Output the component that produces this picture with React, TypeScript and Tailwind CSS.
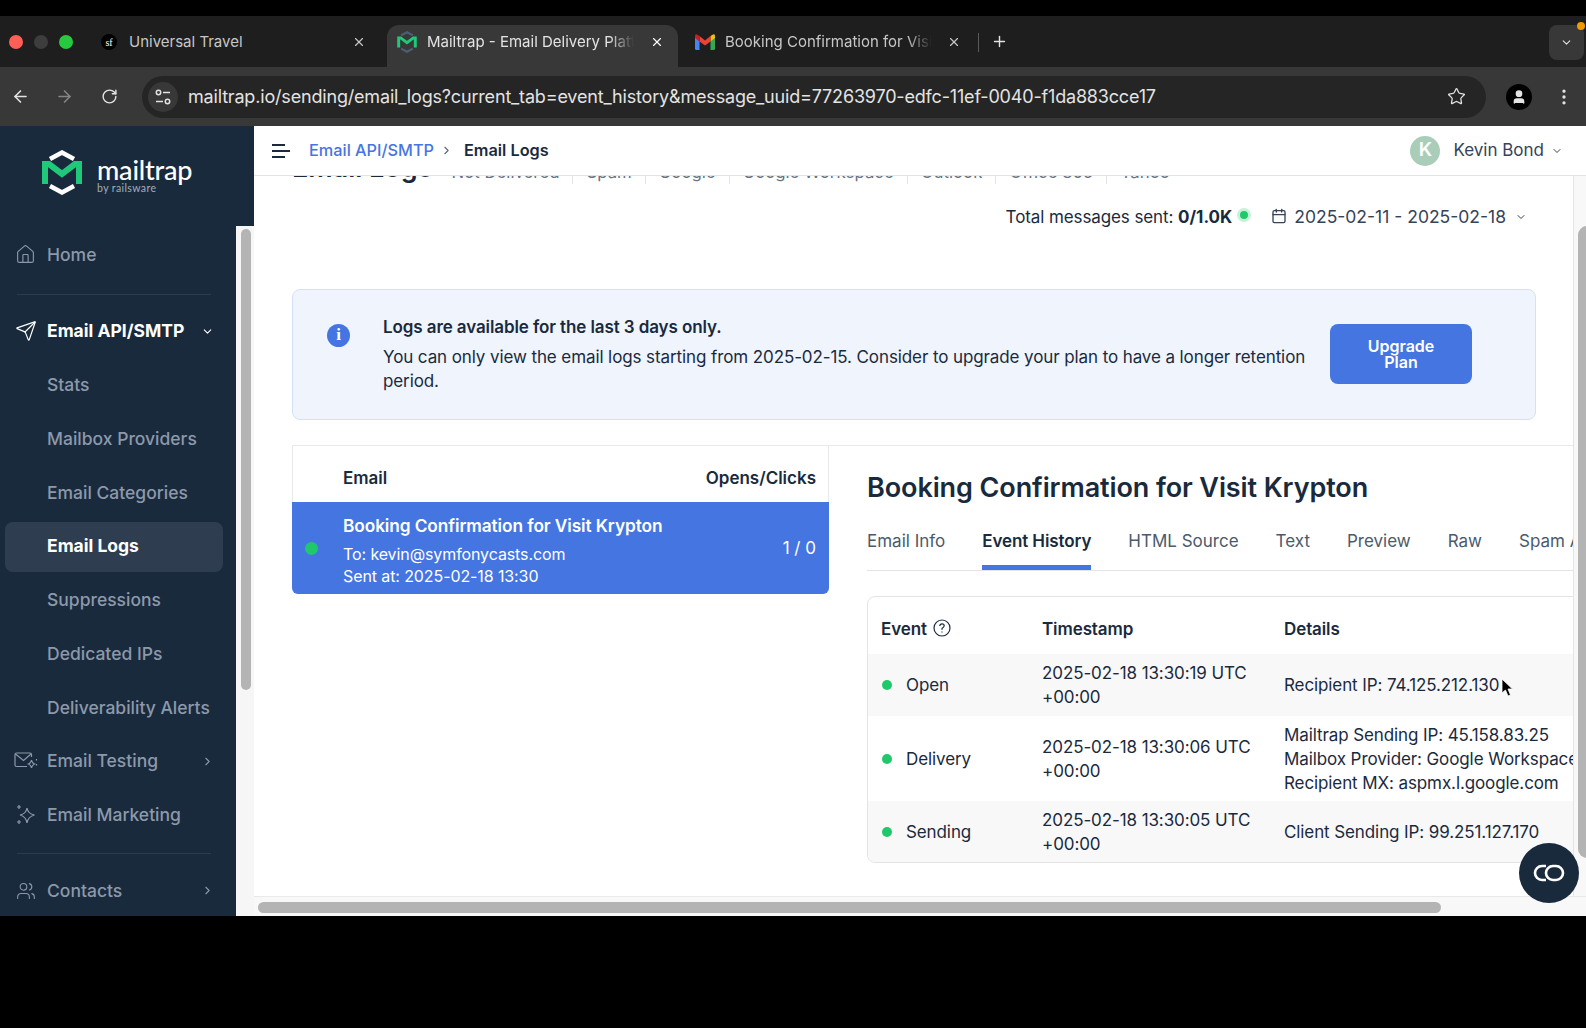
import React from "react";
import {
  ArrowLeft,
  ArrowRight,
  Calendar,
  ChevronDown,
  ChevronRight,
  EllipsisVertical,
  House,
  Plus,
  RotateCw,
  Send,
  Star,
  User,
  Users,
  X,
} from "lucide-react";

const subItems = ["Stats", "Mailbox Providers", "Email Categories", "Email Logs", "Suppressions", "Dedicated IPs", "Deliverability Alerts"];
const tabs = ["Email Info", "Event History", "HTML Source", "Text", "Preview", "Raw", "Spam Analysis"];
const filters = ["Not Delivered", "Spam", "Google", "Google Workspace", "Outlook", "Office 365", "Yahoo"];

const events = [
  { name: "Open", time: "2025-02-18 13:30:19 UTC", details: ["Recipient IP: 74.125.212.130"], h: "h-[62px]", bg: "bg-[#f8f8f9]" },
  {
    name: "Delivery",
    time: "2025-02-18 13:30:06 UTC",
    details: ["Mailtrap Sending IP: 45.158.83.25", "Mailbox Provider: Google Workspace", "Recipient MX: aspmx.l.google.com"],
    h: "h-[85px]",
    bg: "bg-white",
  },
  { name: "Sending", time: "2025-02-18 13:30:05 UTC", details: ["Client Sending IP: 99.251.127.170"], h: "h-[61px]", bg: "bg-[#f8f8f9]" },
];

const MailtrapMark = () => (
  <svg width="40" height="45" viewBox="0 0 40 45" fill="none">
    <path d="M8 9 L20 2.5 L32 9" stroke="#fff" strokeWidth="4.5" />
    <path d="M8 36 L20 42.5 L32 36" stroke="#fff" strokeWidth="4.5" />
    <path d="M3 34 V14 H7 L20 24 L33 14 H37 V34" stroke="#1fc979" strokeWidth="6" />
  </svg>
);

const TinyMark = () => (
  <svg width="20" height="22" viewBox="0 0 40 45" fill="none">
    <path d="M8 9 L20 2.5 L32 9" stroke="#4a6072" strokeWidth="4.5" />
    <path d="M8 36 L20 42.5 L32 36" stroke="#4a6072" strokeWidth="4.5" />
    <path d="M3 34 V14 H7 L20 24 L33 14 H37 V34" stroke="#1fc979" strokeWidth="6" />
  </svg>
);

const GmailMark = () => (
  <svg width="20" height="16" viewBox="0 0 20 16" fill="none">
    <path d="M0 3 V14.5 Q0 16 1.5 16 H4.5 V7 Z" fill="#4285f4" />
    <path d="M20 3 V14.5 Q20 16 18.5 16 H15.5 V7 Z" fill="#34a853" />
    <path d="M15.5 2 L18 .5 Q20 -.5 20 2.5 V4 L15.5 7.5 Z" fill="#fbbc04" />
    <path d="M4.5 7.5 V2 L10 6.5 L15.5 2 V7.5 L10 11.5 Z" fill="#ea4335" />
    <path d="M0 4 V2.5 Q0 -.5 2 .5 L4.5 2 V7.5 Z" fill="#c5221f" />
  </svg>
);

const TuneIcon = () => (
  <svg width="18" height="18" viewBox="0 0 18 18" fill="none" stroke="#e3e3e3" strokeWidth="1.5">
    <circle cx="4.5" cy="4.5" r="2.2" />
    <path d="M9 4.5 H16" />
    <path d="M2 13.5 H9" />
    <circle cx="13.5" cy="13.5" r="2.2" />
  </svg>
);

const MailSparkIcon = () => (
  <svg width="24" height="18" viewBox="0 0 24 18" fill="none" stroke="#8c99aa" strokeWidth="1.2">
    <path d="M13 14.5 H2.5 Q1 14.5 1 13 V2.5 Q1 1 2.5 1 H16 Q17.5 1 17.5 2.5 V5" />
    <path d="M1.5 2 L9.5 8.5 L17 2" />
    <path d="M17.5 8 Q18 11 20.5 12 Q18 13 17.5 16 Q17 13 14.5 12 Q17 11 17.5 8 Z" />
    <path d="M22.5 7 V8.5 M22.5 12 V13.5" />
  </svg>
);

const StarsIcon = () => (
  <svg width="20" height="22" viewBox="0 0 20 22" fill="none" stroke="#8c99aa" strokeWidth="1.2">
    <path d="M11 4 Q12 10 18.5 11 Q12 12.5 11 19 Q10 12.5 4 11 Q10 10 11 4 Z" />
    <path d="M3 1 V5 M1 3 H5 M3 16 V20 M1 18 H5" />
  </svg>
);

const NavRow = ({ icon, label, arrow }: { icon: React.ReactNode; label: string; arrow?: boolean }) => (
  <div className="flex h-[53.7px] items-center text-[17.5px] font-medium text-[#8c99aa]">
    <div className="flex w-[47px] justify-center pl-[9px] pr-[5px]">{icon}</div>
    <span>{label}</span>
    {arrow && <ChevronRight className="ml-auto mr-[22px]" size={13} />}
  </div>
);

const Sidebar = () => (
  <aside className="flex w-[254px] shrink-0 flex-col">
    <div className="flex h-[100px] shrink-0 items-start bg-[#1a2a3d] pl-[42px] pt-[24px]">
      <MailtrapMark />
      <div className="ml-[15px] mt-[5px] flex flex-col">
        <span className="font-['Lato',sans-serif] text-[27px] leading-[30px] font-medium tracking-[-0.2px] text-white">mailtrap</span>
        <span className="font-['Lato',sans-serif] -mt-[3px] text-[10.5px] leading-[12px] tracking-[0.4px] text-[#a3adb9]">by railsware</span>
      </div>
    </div>
    <div className="flex min-h-0 flex-1">
      <nav className="w-[236px] shrink-0 overflow-hidden bg-[#1a2a3d] pt-[2px]">
        <NavRow icon={<House size={21} strokeWidth={1.3} />} label="Home" />
        <div className="mx-[17px] mt-[12px] h-px w-[194px] bg-[#2b3b50]" />
        <div className="mt-[9px] flex h-[55px] items-center text-[17.5px] font-bold text-white">
          <div className="flex w-[47px] justify-center pl-[9px] pr-[5px]">
            <Send size={22} strokeWidth={1.3} />
          </div>
          <span>Email API/SMTP</span>
          <ChevronDown className="ml-auto mr-[22px]" size={13} />
        </div>
        {subItems.map((item) => (
          <div key={item} className="flex h-[53.7px] items-center pl-[5px] pr-[13px]">
            <div
              className={
                item === "Email Logs"
                  ? "flex h-[50px] w-full items-center rounded-lg bg-[#2f3d51] pl-[42px] text-[17.5px] font-bold text-white"
                  : "flex h-[50px] w-full items-center pl-[42px] text-[17.5px] font-medium text-[#8c99aa]"
              }
            >
              {item}
            </div>
          </div>
        ))}
        <NavRow icon={<MailSparkIcon />} label="Email Testing" arrow />
        <NavRow icon={<StarsIcon />} label="Email Marketing" arrow={false} />
        <div className="mx-[17px] mt-[11px] h-px w-[194px] bg-[#2b3b50]" />
        <div className="mt-[10px]">
          <NavRow icon={<Users size={20} strokeWidth={1.3} />} label="Contacts" arrow />
        </div>
      </nav>
      <div className="w-[18px] bg-[#f6f6f6] px-[5px] pt-[3px]">
        <div className="h-[461px] w-[10px] rounded-full bg-[#b4b4b4]" />
      </div>
    </div>
  </aside>
);

const BrowserChrome = () => (
  <>
    <div className="flex h-[51px] shrink-0 items-end bg-[#1e1e1e] text-[15px] text-[#c7c7c7]">
      <div className="flex h-[51px] w-[96px] items-center gap-[11px] pl-[9px]">
        <span className="h-[14px] w-[14px] rounded-full bg-[#ff5f57]" />
        <span className="h-[14px] w-[14px] rounded-full bg-[#3d3d3d]" />
        <span className="h-[14px] w-[14px] rounded-full bg-[#27c93f]" />
      </div>
      <div className="flex h-[42px] w-[291px] items-center pb-[8px] pl-[5px] pr-[21px]">
        <span className="mr-[12px] flex h-[16px] w-[16px] items-center justify-center rounded-full bg-black font-['Liberation_Serif',serif] text-[10px] text-white">
          sf
        </span>
        <span>Universal Travel</span>
        <X className="ml-auto" size={14} />
      </div>
      <div className="flex h-[42px] w-[291px] items-center rounded-t-xl bg-[#383838] pb-[8px] pl-[10px] pr-[14px] text-[#e3e3e3]">
        <TinyMark />
        <span className="ml-[10px] w-[207px] overflow-hidden whitespace-nowrap [mask-image:linear-gradient(to_right,black_88%,transparent)]">
          Mailtrap - Email Delivery Platform
        </span>
        <X className="ml-auto text-white" size={14} />
      </div>
      <div className="flex h-[42px] w-[300px] items-center pb-[8px] pl-[17px] pr-[17px]">
        <GmailMark />
        <span className="ml-[10px] w-[207px] overflow-hidden whitespace-nowrap [mask-image:linear-gradient(to_right,black_88%,transparent)]">
          Booking Confirmation for Visit Krypton
        </span>
        <X className="ml-auto" size={14} />
      </div>
      <div className="mb-[15px] h-[19px] w-px bg-[#5a5a5a]" />
      <div className="mb-[17px] ml-[12px]">
        <Plus size={17} className="text-[#e3e3e3]" />
      </div>
      <div className="relative mb-[7px] ml-auto mr-[2px] flex h-[35px] w-[35px] items-center justify-center rounded-lg bg-[#383838]">
        <ChevronDown size={13} className="text-[#e3e3e3]" />
        <span className="absolute -right-[1px] -top-[3px] h-[8px] w-[8px] rounded-full bg-[#f29900]" />
      </div>
    </div>
    <div className="flex h-[59px] shrink-0 items-center bg-[#383838] text-[#e3e3e3]">
      <ArrowLeft className="ml-[11px]" size={19} />
      <ArrowRight className="ml-[25px] text-[#858585]" size={19} />
      <RotateCw className="ml-[27px]" size={17} />
      <div className="ml-[24px] flex h-[42px] w-[1344px] items-center rounded-full bg-[#252525] pl-[6px] pr-[20px]">
        <div className="flex h-[30px] w-[30px] items-center justify-center rounded-full bg-[#383838]">
          <TuneIcon />
        </div>
        <span className="ml-[10px] text-[18px] tracking-[-0.18px]">
          mailtrap.io/sending/email_logs?current_tab=event_history&amp;message_uuid=77263970-edfc-11ef-0040-f1da883cce17
        </span>
        <Star className="ml-auto" size={19} strokeWidth={1.6} />
      </div>
      <div className="ml-[20px] flex h-[26px] w-[26px] items-center justify-center rounded-full bg-black">
        <User size={16} fill="#e3e3e3" />
      </div>
      <EllipsisVertical className="ml-[22px]" size={20} />
    </div>
  </>
);

const Alert = () => (
  <div className="flex h-[131px] items-center rounded-lg border border-[#d5e2f5] bg-[#eff4fd] pl-[34px] text-[#1a2a3d]">
    <div className="mb-[39px] flex h-[23px] w-[23px] shrink-0 items-center justify-center rounded-full bg-[#4575e0] font-['Liberation_Serif',serif] text-[17px] font-bold text-white">
      i
    </div>
    <div className="ml-[33px] w-[931px] pb-[1px] text-[17px] leading-[24px] tracking-[-0.1px]">
      <div className="mb-[6px] font-semibold">Logs are available for the last 3 days only.</div>
      <div>You can only view the email logs starting from 2025-02-15. Consider to upgrade your plan to have a longer retention period.</div>
    </div>
    <button className="mb-[2px] ml-[16px] h-[60px] w-[142px] rounded-lg bg-[#4575e0] px-[30px] text-[16px] leading-[16px] font-semibold text-white">
      Upgrade Plan
    </button>
  </div>
);

const EmailList = () => (
  <div className="w-[537px] shrink-0">
    <div className="flex h-[56px] items-center justify-between border-l border-r border-[#e8e9eb] pl-[50px] pr-[12px] pt-[10px] text-[17px] font-semibold text-[#1a2a3d]">
      <span>Email</span>
      <span>Opens/Clicks</span>
    </div>
    <div className="flex h-[92px] items-center rounded-b-md bg-[#4575e0] pl-[13px] pr-[13px] text-white">
      <span className="h-[13px] w-[13px] rounded-full bg-[#1fc96b]" />
      <div className="ml-[25px] pt-[6px] text-[16px] leading-[22px] tracking-[-0.1px]">
        <div className="mb-[6px] text-[17.3px] font-semibold">Booking Confirmation for Visit Krypton</div>
        <div>To: kevin@symfonycasts.com</div>
        <div>Sent at: 2025-02-18 13:30</div>
      </div>
      <span className="ml-auto pt-[2px] text-[17px]">1 / 0</span>
    </div>
  </div>
);

const EventTable = () => (
  <div className="mt-[25px] w-[760px] overflow-hidden rounded-lg border border-[#e3e4e6] text-[17px] tracking-[-0.1px] text-[#1a2a3d]">
    <div className="flex h-[57px] items-center pl-[13px] pt-[8px] font-semibold">
      <div className="flex w-[161px] items-center gap-[6px]">
        Event
        <svg className="mb-[4px]" width="18" height="18" viewBox="0 0 18 18" fill="none" stroke="#1a2a3d" strokeWidth="1.2">
          <circle cx="9" cy="9" r="8" />
          <path d="M6.8 7 Q7 4.8 9 4.8 Q11.2 4.8 11.2 6.8 Q11.2 8 9 9.4 V10.8 M9 12.6 V13.6" />
        </svg>
      </div>
      <div className="w-[242px]">Timestamp</div>
      <div>Details</div>
    </div>
    {events.map((ev) => (
      <div key={ev.name} className={`flex items-center pl-[14px] leading-[24px] ${ev.h} ${ev.bg}`}>
        <div className="flex w-[160px] items-center gap-[14px]">
          <span className="h-[10px] w-[10px] rounded-full bg-[#1fc96b]" />
          {ev.name}
        </div>
        <div className="w-[242px]">
          {ev.time}
          <br />
          +00:00
        </div>
        <div>
          {ev.details.map((d) => (
            <div key={d}>{d}</div>
          ))}
        </div>
      </div>
    ))}
  </div>
);

const Main = () => (
  <main className="relative flex min-w-0 flex-1 flex-col bg-white">
    <header className="flex h-[50px] shrink-0 items-center border-b border-[#e3e4e6] pl-[17px] pr-[23px] text-[16.3px]">
      <svg width="20" height="16" viewBox="0 0 20 16" fill="none" stroke="#1a2a3d" strokeWidth="2.2">
        <path d="M1 2 H14 M1 8 H19 M1 14 H14" />
      </svg>
      <span className="ml-[18px] font-medium text-[#4575e0]">Email API/SMTP</span>
      <ChevronRight className="mx-[6px] text-[#5b6878]" size={13} />
      <span className="ml-[5px] font-semibold text-[#1a2a3d]">Email Logs</span>
      <div className="ml-auto flex h-[30px] w-[30px] items-center justify-center rounded-full bg-[#a9cdb9] text-[19px] font-semibold text-white">K</div>
      <span className="ml-[13px] text-[17px] text-[#35435a]">Kevin Bond</span>
      <ChevronDown className="ml-[7px] text-[#35435a]" size={12} />
    </header>
    <div className="flex min-h-0 flex-1">
      <div className="min-w-0 flex-1 overflow-hidden">
        <div className="h-[8px] overflow-hidden pl-[38px]">
          <div className="-mt-[22px] flex items-start text-[#66727f]">
            <span className="-mt-[4px] mr-[6px] text-[27px] leading-[36px] font-semibold text-[#1a2a3d]">Email Logs</span>
            {filters.map((f) => (
              <span key={f} className="border-r border-[#e3e4e6] px-[13px] text-[16.8px] leading-[36px] last:border-0">
                {f}
              </span>
            ))}
          </div>
        </div>
        <div className="flex h-[105px] items-start justify-end pr-[46px] pt-[21px] text-[17px] leading-[24px] text-[#1a2a3d]">
          <span className="tracking-[-0.1px]">Total messages sent:&nbsp;</span>
          <span className="font-bold">0/1.0K</span>
          <span className="ml-[5px] mt-[3px] h-[14px] w-[14px] rounded-full border-[3px] border-[#c6f2d8] bg-[#1fc96b]" />
          <Calendar className="ml-[20px] mt-[3px] text-[#35435a]" size={16} />
          <span className="ml-[7px] text-[17.5px] text-[#35435a]">2025-02-11 - 2025-02-18</span>
          <ChevronDown className="ml-[9px] mt-[6px] text-[#35435a]" size={12} />
        </div>
        <div className="w-[1282px] pl-[38px]">
          <div className="w-[1244px]">
            <Alert />
          </div>
          <div className="mt-[25px] flex w-[1400px] border-t border-[#e8e9eb]">
            <EmailList />
            <div className="min-w-0 flex-1 pl-[38px]">
              <h1 className="pt-[20px] text-[27px] leading-[44px] font-semibold tracking-[-0.1px] text-[#1a2a3d]">Booking Confirmation for Visit Krypton</h1>
              <div className="mt-[4px] flex gap-[37px] border-b border-[#e3e4e6] text-[17px] text-[#4b5a6c]">
                {tabs.map((t) => (
                  <div
                    key={t}
                    className={
                      t === "Event History"
                        ? "flex h-[56px] items-start whitespace-nowrap border-b-[5px] border-[#4575e0] pt-[15px] font-semibold tracking-[-0.1px] text-[#1a2a3d]"
                        : "flex h-[56px] items-start whitespace-nowrap pt-[15px]"
                    }
                  >
                    {t}
                  </div>
                ))}
              </div>
              <EventTable />
            </div>
          </div>
        </div>
      </div>
      <div className="w-[13px] shrink-0 border-l border-[#e3e4e6] bg-[#f8f8f8] pl-[4px] pt-[50px]">
        <div className="h-[632px] w-[9px] rounded-l-full bg-[#b4b4b4]" />
      </div>
    </div>
    <div className="h-[20px] shrink-0 border-t border-[#e8e9eb] bg-[#f8f8f8] pl-[4px] pt-[5px]">
      <div className="h-[11px] w-[1183px] rounded-full bg-[#b4b4b4]" />
    </div>
    <div className="absolute bottom-[13px] right-[7px] flex h-[60px] w-[60px] items-center justify-center rounded-full bg-[#1a2a3d]">
      <svg width="32" height="18" viewBox="0 0 32 18" fill="none" stroke="#fff" strokeWidth="2.6">
        <path d="M13 2 H9 A7 7 0 0 0 9 16 H13" />
        <rect x="13" y="2" width="17" height="14" rx="7" />
      </svg>
    </div>
    <svg className="absolute left-[1247px] top-[552px]" width="12" height="19" viewBox="0 0 12 19">
      <path d="M1 1 V15 L4.5 12 L7 18 L9.5 17 L7 11 H11.5 Z" fill="#000" stroke="#fff" strokeWidth="0.8" />
    </svg>
  </main>
);

export default function App() {
  return (
    <div className="flex h-[1028px] w-[1586px] flex-col overflow-hidden bg-black font-['Inter',sans-serif]">
      <div className="h-[16px] shrink-0" />
      <BrowserChrome />
      <div className="flex h-[790px] shrink-0">
        <Sidebar />
        <Main />
      </div>
    </div>
  );
}
